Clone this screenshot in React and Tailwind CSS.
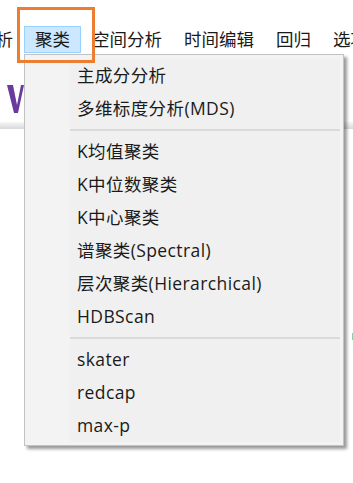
const menuBar = ['分析', '聚类', '空间分析', '时间编辑', '回归', '选项'];

const groups = [
  ['主成分分析', '多维标度分析(MDS)'],
  ['K均值聚类', 'K中位数聚类', 'K中心聚类', '谱聚类(Spectral)', '层次聚类(Hierarchical)', 'HDBScan'],
  ['skater', 'redcap', 'max-p'],
];

export default function App() {
  return (
    <div className="relative w-[353px] h-[483px] bg-white overflow-hidden font-['Open_Sans','Noto_Sans_CJK_SC',sans-serif] text-[17.5px] text-[#1a1a1a]">
      {/* Menu bar */}
      <div className="pt-[26px] flex -ml-[33px] whitespace-nowrap">
        {menuBar.map((label) =>
          label === '聚类' ? (
            <div key={label} className="h-[27px] px-[10px] flex items-center bg-[#cce8ff] border border-[#99d1ff]">
              {label}
            </div>
          ) : (
            <div key={label} className="h-[27px] px-[11px] flex items-center">
              {label}
            </div>
          )
        )}
      </div>

      {/* Toolbar behind the menu */}
      <div className="h-[69px] pl-[7px] pt-[32px]">
        <svg width="18" height="30" viewBox="0 0 18 30">
          <polygon points="0,0 6,0 10,20 14,0 17,0 11,28 7,28" fill="#6b3a9e" />
        </svg>
      </div>
      <div className="h-[7px] bg-gradient-to-b from-[#f6f6f6] to-[#d9d9d9]" />

      {/* Dropdown */}
      <div className="absolute left-[24px] top-[54px] w-[320px] border border-[#c2c2c2] bg-[#f3f3f3] shadow-[3px_3px_3px_rgba(0,0,0,0.4)] pt-[4px] pb-[3px] pl-[45px] pr-[3px] tracking-[0.4px]">
        <div className="bg-[#f0f0f0]">
          {groups.map((items, gi) => (
            <div key={gi}>
              {gi > 0 && (
                <div className="h-[10px] flex items-center">
                  <div className="h-[2px] w-full bg-[#dadada]" />
                </div>
              )}
              {items.map((item) => (
                <div key={item} className="h-[33px] flex items-center pl-[7px] whitespace-nowrap">
                  {item}
                </div>
              ))}
            </div>
          ))}
        </div>
      </div>

      <div className="absolute left-[352px] top-[333px] w-px h-[7px] bg-[#8fcfa5]" />

      {/* Orange highlight */}
      <div className="absolute left-[17px] top-[7px] w-[78px] h-[56px] border-[3px] border-[#ed7d31]" />
    </div>
  );
}
